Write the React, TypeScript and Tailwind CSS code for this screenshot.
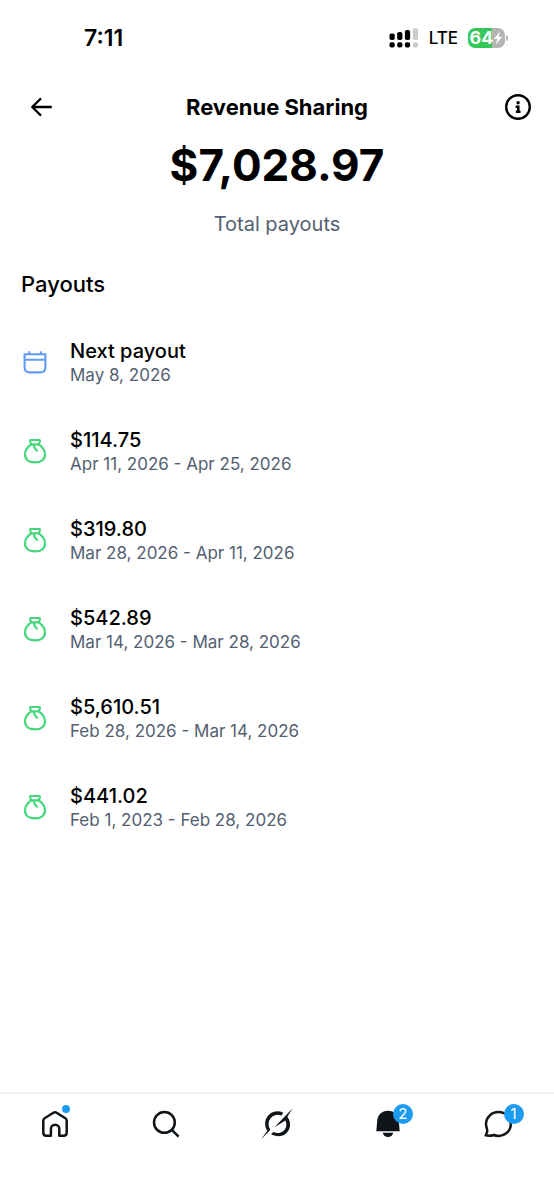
import React from "react";

type Payout = { title: string; detail: string; kind: "next" | "paid" };

const payouts: Payout[] = [
  { title: "Next payout", detail: "May 8, 2026", kind: "next" },
  { title: "$114.75", detail: "Apr 11, 2026 - Apr 25, 2026", kind: "paid" },
  { title: "$319.80", detail: "Mar 28, 2026 - Apr 11, 2026", kind: "paid" },
  { title: "$542.89", detail: "Mar 14, 2026 - Mar 28, 2026", kind: "paid" },
  { title: "$5,610.51", detail: "Feb 28, 2026 - Mar 14, 2026", kind: "paid" },
  { title: "$441.02", detail: "Feb 1, 2023 - Feb 28, 2026", kind: "paid" },
];

function SignalIcon() {
  return (
    <svg width="30" height="20" viewBox="0 0 30 20" aria-hidden="true">
      <g fill="#000">
        <rect x="0.5" y="5.5" width="5.2" height="6.5" rx="1.8" />
        <rect x="8.2" y="4" width="5.2" height="8" rx="1.8" />
        <rect x="15.9" y="2" width="5.2" height="10" rx="1.8" />
        <rect x="0.5" y="14.3" width="5.2" height="5.2" rx="1.8" />
        <rect x="8.2" y="14.3" width="5.2" height="5.2" rx="1.8" />
        <rect x="15.9" y="14.3" width="5.2" height="5.2" rx="1.8" />
      </g>
      <g fill="#ccc">
        <rect x="23.8" y="0.3" width="5.2" height="11.7" rx="1.8" />
        <rect x="23.8" y="14.3" width="5.2" height="5.2" rx="1.8" />
      </g>
    </svg>
  );
}

function Battery() {
  return (
    <div className="flex items-center gap-px">
      <div className="flex h-5 w-[37px] items-center justify-center rounded-[7px] bg-linear-to-r from-[#34c759] from-64% to-[#b5b5b5] to-64% text-white">
        <span className="text-[18px] leading-5 font-bold">64</span>
        <svg width="10" height="14" viewBox="0 0 9 14" fill="currentColor" aria-hidden="true">
          <path d="M6.6 0.6 0.4 8h3.5L2.3 13.4 8.7 5.8H5.2z" />
        </svg>
      </div>
      <div className="h-[6px] w-[2px] rounded-r-full bg-[#b5b5b5]" />
    </div>
  );
}

function BackIcon() {
  return (
    <svg width="24" height="24" viewBox="0 0 24 24" fill="none" stroke="#000" strokeWidth="2.3" aria-hidden="true">
      <path d="M22.8 12H3M12 3.4 3.2 12l8.8 8.6" strokeLinejoin="round" />
    </svg>
  );
}

function InfoIcon() {
  return (
    <svg width="28" height="28" viewBox="0 0 28 28" fill="none" stroke="#000" aria-hidden="true">
      <circle cx="14" cy="14" r="11.8" strokeWidth="2.4" />
      <circle cx="14.1" cy="9.8" r="1.7" fill="#000" stroke="none" />
      <path d="M11.6 13.700h2.700v5M11.900 18.700h4.600" strokeWidth="2.500" />
    </svg>
  );
}

function CalendarIcon() {
  return (
    <svg width="26" height="26" viewBox="0 0 26 26" fill="none" stroke="#629bf3" strokeWidth="2.1" aria-hidden="true">
      <path d="M2.600 4.200h20.800v13q0 5.200-5.200 5.200H7.800q-5.200 0-5.200-5.200z" />
      <path d="M2.600 9.800h20.800M7.200 1.200v3M18.800 1.200v3" />
    </svg>
  );
}

function MoneyBagIcon() {
  return (
    <svg width="26" height="26" viewBox="0 0 26 26" fill="none" stroke="#45d77b" strokeWidth="2.2" strokeLinecap="round" strokeLinejoin="round" aria-hidden="true">
      <path d="M9.200 5.400 8.200 2.500C7.900 1.500 8.300.9 9.300.9h7.400c1 0 1.400.6 1.100 1.600L16.800 5.400z" />
      <path d="M9.200 5.400C5.500 8 3 11.600 3 15.500c0 5 3.900 7.900 10 7.900s10-2.900 10-7.900c0-3.900-2.500-7.500-6.200-10.100" />
      <path d="M11.800 5.800c.2 2.700 1.300 4.400 3.200 5.900" />
    </svg>
  );
}

function HomeIcon() {
  return (
    <svg width="32" height="32" viewBox="0 0 32 32" fill="none" stroke="#0f1419" strokeWidth="2.5" strokeLinejoin="round" aria-hidden="true">
      <path d="M4.300 12.700q0-1.600 1.300-2.400l8.800-5.600q1.600-1 3.200 0l8.800 5.600q1.300.8 1.300 2.400v12q0 3-3 3h-4.400V20.900a4.200 4.200 0 0 0-8.400 0v6.800H7.300q-3 0-3-3z" />
    </svg>
  );
}

function SearchIcon() {
  return (
    <svg width="32" height="32" viewBox="0 0 32 32" fill="none" stroke="#0f1419" strokeWidth="2.5" aria-hidden="true">
      <circle cx="14.4" cy="14.4" r="10.4" />
      <path d="m21.8 21.8 6.8 6.8" />
    </svg>
  );
}

function SlashRingIcon() {
  return (
    <svg width="32" height="32" viewBox="0 0 32 32" aria-hidden="true">
      <g fill="#0f1419">
        <path d="M22.200 4.800A12.400 12.400 0 0 0 6.200 22.800L0 31.500 9.400 21.700A9.400 9.400 0 0 1 20.600 7.400z" />
        <path d="M31.500 0.500 26.400 8.800c4.600 6.300 3 13.900-2.400 17.400-4.600 3-10.200 2.300-14-.2l2.600-2c3.300 1.700 6.800 1.300 9.500-.7 3.400-2.600 4.100-6.800 2.300-10.800L13.400 19.300z" />
      </g>
    </svg>
  );
}

function BellIcon() {
  return (
    <svg width="32" height="32" viewBox="0 0 32 32" fill="#0f1419" aria-hidden="true">
      <path d="M16 2.800C9.700 2.800 5.600 7 5.200 13.100L4.300 23.200h23.400l-.9-10.100C26.400 7 22.300 2.800 16 2.800zM10.700 24.800h10.600c-.7 2.600-2.700 4.300-5.300 4.300s-4.600-1.700-5.300-4.300z" />
    </svg>
  );
}

function ChatIcon() {
  return (
    <svg width="32" height="32" viewBox="0 0 32 32" fill="none" stroke="#0f1419" strokeWidth="2.5" strokeLinejoin="round" aria-hidden="true">
      <path d="M2.700 27.400c1.700-2.500 2.100-4.200 1.100-7.100-.5-1.300-.8-2.800-.8-4.300C3 9.300 8.600 4.100 15.500 4.100S27.800 9.300 27.800 16s-5.300 11.900-12.300 11.900c-1.800 0-3.300-.2-4.800-.9-2.900 1-5.200 1.100-8 .4z" />
    </svg>
  );
}

function Badge({ count }: { count: number }) {
  return (
    <span className="absolute -top-1 -right-[9px] flex size-5 items-center justify-center rounded-full bg-[#1d9bf0] text-[15px] leading-5 text-white">
      {count}
    </span>
  );
}

const tabs = [
  { label: "Home", icon: <HomeIcon />, dot: true },
  { label: "Search", icon: <SearchIcon /> },
  { label: "Grok", icon: <SlashRingIcon /> },
  { label: "Notifications", icon: <BellIcon />, count: 2 },
  { label: "Messages", icon: <ChatIcon />, count: 1 },
];

export default function App() {
  return (
    <div className="flex min-h-screen flex-col bg-white font-['Inter','Liberation_Sans',sans-serif] text-black">
      <div className="flex h-[76px] items-center justify-between pr-[46px] pl-[84px]">
        <span className="text-[23px] leading-7 font-semibold">7:11</span>
        <div className="flex items-center gap-[10px]">
          <SignalIcon />
          <span className="text-[17px] leading-5 font-medium">LTE</span>
          <Battery />
        </div>
      </div>

      <header className="grid h-[62px] grid-cols-[1fr_auto_1fr] items-center pr-[22px] pl-[29px]">
        <button type="button" aria-label="Back" className="justify-self-start">
          <BackIcon />
        </button>
        <h1 className="pr-[7px] text-[22px] leading-7 font-bold">Revenue Sharing</h1>
        <button type="button" aria-label="About revenue sharing" className="justify-self-end">
          <InfoIcon />
        </button>
      </header>

      <main className="flex-1">
        <section className="flex flex-col items-center gap-4">
          <p className="text-[44px] leading-[54px] font-bold">$7,028.97</p>
          <p className="text-[20px] leading-8 text-[#536071]">Total payouts</p>
        </section>

        <section className="px-[21px] pt-[30px]">
          <h2 className="text-[22px] leading-7 font-medium">Payouts</h2>
          <ul className="flex flex-col gap-[41px] pt-[41px] pb-10">
            {payouts.map((p) => (
              <li key={p.title} className="flex items-center gap-[22px]">
                <span className="flex w-[27px] shrink-0 justify-center">
                  {p.kind === "next" ? <CalendarIcon /> : <MoneyBagIcon />}
                </span>
                <div>
                  <p className="text-[20px] leading-6 font-medium">{p.title}</p>
                  <p className="text-[17px] leading-6 text-[#536071]">{p.detail}</p>
                </div>
              </li>
            ))}
          </ul>
        </section>
      </main>

      <nav className="grid h-[108px] grid-cols-5 border-t-2 border-[#eff3f4] pt-[14px]">
        {tabs.map((t) => (
          <a key={t.label} href="#" aria-label={t.label} className="flex items-start justify-center">
            <span className="relative">
              {t.icon}
              {t.dot && <span className="absolute -top-[3px] right-px size-2 rounded-full bg-[#1d9bf0]" />}
              {t.count && <Badge count={t.count} />}
            </span>
          </a>
        ))}
      </nav>
    </div>
  );
}
